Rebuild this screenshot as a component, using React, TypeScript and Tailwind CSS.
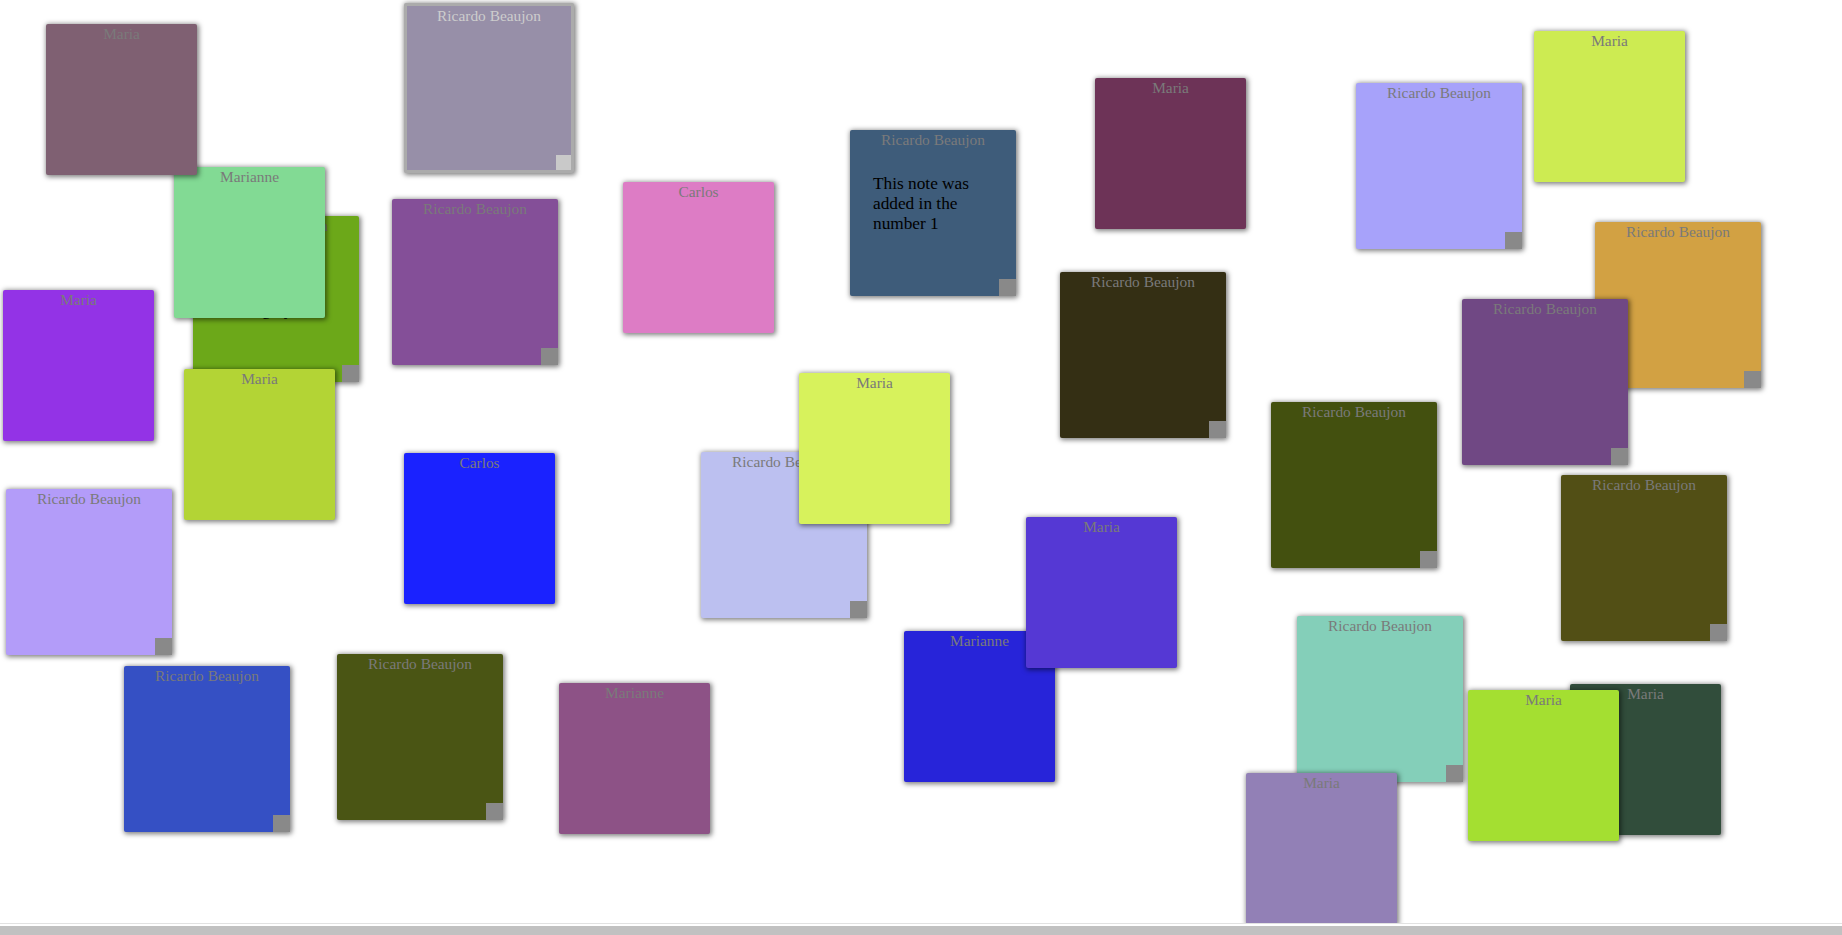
type Note = {
  id: string;
  author: string;
  color: string;
  x: number;
  y: number;
  big?: boolean;
  text?: string;
  selected?: boolean;
};

// stacking order = array order (later ones sit on top)
const notes: Note[] = [
  { id: "c", author: "Ricardo Beaujon", color: "#6ca819", x: 193, y: 216, big: true, text: "This note was added in the evening by" },
  { id: "d", author: "Marianne", color: "#82da94", x: 174, y: 167 },
  { id: "a", author: "Maria", color: "#7f6072", x: 46, y: 24 },
  { id: "e", author: "Ricardo Beaujon", color: "#844f98", x: 392, y: 199, big: true },
  { id: "f", author: "Maria", color: "#9333e6", x: 3, y: 290 },
  { id: "g", author: "Maria", color: "#b3d435", x: 184, y: 369 },
  { id: "h", author: "Carlos", color: "#1a22ff", x: 404, y: 453 },
  { id: "i", author: "Ricardo Beaujon", color: "#b39cf9", x: 6, y: 489, big: true },
  { id: "j", author: "Ricardo Beaujon", color: "#3550c4", x: 124, y: 666, big: true },
  { id: "k", author: "Ricardo Beaujon", color: "#4a5514", x: 337, y: 654, big: true },
  { id: "l", author: "Marianne", color: "#8d5286", x: 559, y: 683 },
  { id: "m", author: "Carlos", color: "#dd7cc5", x: 623, y: 182 },
  { id: "n", author: "Ricardo Beaujon", color: "#3e5c7a", x: 850, y: 130, big: true, text: "This note was added in the number 1" },
  { id: "o", author: "Maria", color: "#6d3357", x: 1095, y: 78 },
  { id: "p", author: "Ricardo Beaujon", color: "#342f14", x: 1060, y: 272, big: true },
  { id: "q", author: "Ricardo Beaujon", color: "#bcc0f0", x: 701, y: 452, big: true },
  { id: "r", author: "Maria", color: "#d7f25c", x: 799, y: 373 },
  { id: "s", author: "Marianne", color: "#2724d9", x: 904, y: 631 },
  { id: "t", author: "Maria", color: "#5538d4", x: 1026, y: 517 },
  { id: "u", author: "Ricardo Beaujon", color: "#a7a2fa", x: 1356, y: 83, big: true },
  { id: "v", author: "Maria", color: "#cdeb52", x: 1534, y: 31 },
  { id: "w", author: "Ricardo Beaujon", color: "#d2a143", x: 1595, y: 222, big: true },
  { id: "x", author: "Ricardo Beaujon", color: "#704884", x: 1462, y: 299, big: true },
  { id: "y", author: "Ricardo Beaujon", color: "#43500f", x: 1271, y: 402, big: true },
  { id: "z", author: "Ricardo Beaujon", color: "#524f15", x: 1561, y: 475, big: true },
  { id: "aa", author: "Ricardo Beaujon", color: "#84cfb9", x: 1297, y: 616, big: true },
  { id: "ab", author: "Maria", color: "#314d3b", x: 1570, y: 684 },
  { id: "ac", author: "Maria", color: "#a4df31", x: 1468, y: 690 },
  { id: "ad", author: "Maria", color: "#9280b6", x: 1246, y: 773 },
  { id: "b", author: "Ricardo Beaujon", color: "#978fa8", x: 404, y: 3, big: true, selected: true },
];

function StickyNote({ note }: { note: Note }) {
  const size = note.big ? 166 : 151;
  return (
    <div
      className={
        "absolute flex flex-col rounded-[2px] shadow-[1px_1px_5px_1px_rgba(0,0,0,0.5)] " +
        (note.selected ? "border-[3px] border-[#ababab]" : "")
      }
      style={{
        left: note.x,
        top: note.y,
        width: note.selected ? size + 4 : size,
        height: note.selected ? size + 4 : size,
        backgroundColor: note.color,
      }}
    >
      <div
        className={
          "pt-px text-center text-[15.4px] leading-[18px] " +
          (note.selected ? "text-[#cdcdcd]" : "text-[#7a7a7a]")
        }
      >
        {note.author}
      </div>
      {note.text && (
        <p className="mt-[25px] px-[23px] text-[17.3px] leading-[20px] text-black">
          {note.text}
        </p>
      )}
      {note.big && (
        <div
          className={
            "absolute right-0 bottom-0 " +
            (note.selected ? "h-[15px] w-[15px] bg-[#c9c9c9]" : "h-[17px] w-[17px] bg-[#898989]")
          }
        />
      )}
    </div>
  );
}

export default function App() {
  return (
    <div className="flex h-[935px] w-full flex-col overflow-hidden bg-white font-['Liberation_Serif',serif]">
      <div className="relative h-[923px] shrink-0 overflow-hidden">
        {notes.map((n) => (
          <StickyNote key={n.id} note={n} />
        ))}
      </div>
      <div className="h-px shrink-0 bg-[#e2e2e2]" />
      <div className="h-[2px] shrink-0 bg-white" />
      <div className="h-[9px] shrink-0 bg-[#c1c1c1]" />
    </div>
  );
}
